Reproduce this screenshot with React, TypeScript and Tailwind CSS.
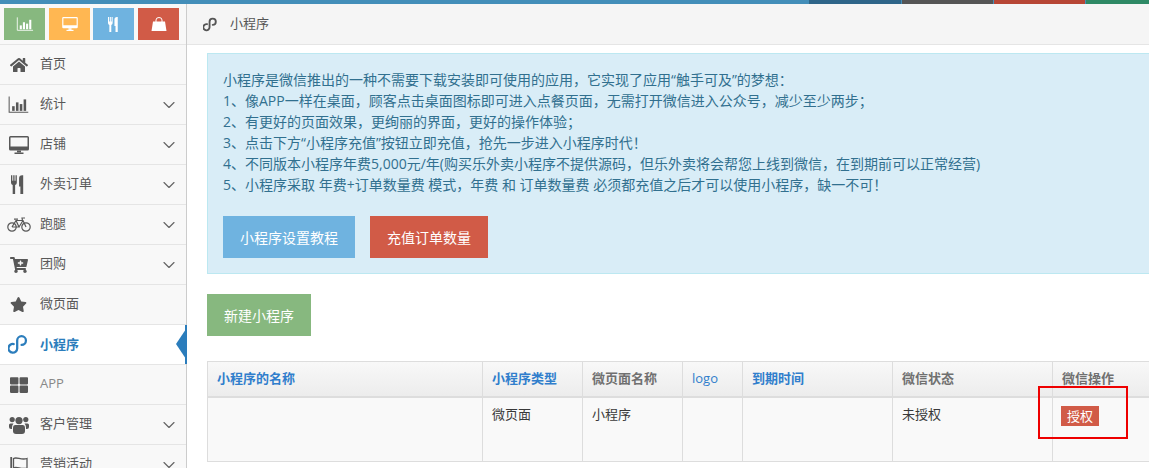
import type { ReactNode } from 'react';
import { ChevronDown } from 'lucide-react';
import { FaCartPlus, FaHome, FaStar, FaThLarge } from 'react-icons/fa';

function MiniProgramIcon({ size, strokeWidth }: { size: number; strokeWidth: number }) {
  return (
    <svg width={size} height={size} viewBox="0 0 24 24" fill="none" stroke="currentColor" strokeWidth={strokeWidth} strokeLinecap="round">
      <path d="M6.5 11.5 A5 5 0 1 0 10.5 16.5 V7.5 A5 5 0 1 1 15.5 12.5" />
    </svg>
  );
}

function ChartIcon({ width, height }: { width: number; height: number }) {
  return (
    <svg width={width} height={height} viewBox="0 0 24 20" fill="currentColor">
      <path d="M1 0.5 V19 H23.5" fill="none" stroke="currentColor" strokeWidth="1.2" />
      <rect x="4.5" y="12" width="3" height="5.5" />
      <rect x="9" y="7.5" width="3" height="10" />
      <rect x="13.5" y="9.5" width="3" height="8" />
      <rect x="18" y="4" width="3" height="13.5" />
    </svg>
  );
}

function DesktopIcon({ width, height }: { width: number; height: number }) {
  return (
    <svg width={width} height={height} viewBox="0 0 20 18" fill="currentColor">
      <path fillRule="evenodd" d="M1.5 0 H18.5 A1.5 1.5 0 0 1 20 1.5 V13 A1.5 1.5 0 0 1 18.5 14.5 H1.5 A1.5 1.5 0 0 1 0 13 V1.5 A1.5 1.5 0 0 1 1.5 0 Z M1.5 1.5 V10.5 H18.5 V1.5 Z" />
      <rect x="8" y="14.5" width="4" height="2" />
      <rect x="5.5" y="16.5" width="9" height="1.5" />
    </svg>
  );
}

function CutleryIcon({ width, height }: { width: number; height: number }) {
  return (
    <svg width={width} height={height} viewBox="0 0 16 20" fill="currentColor">
      <path d="M0 0 H1.4 V6 H2.4 V0 H3.8 V6 H4.8 V0 H6.2 V8 Q6.2 10 4.4 10.6 V20 H1.8 V10.6 Q0 10 0 8 Z" />
      <path d="M10 20 V12 H8.6 V3.5 Q8.6 0 12 0 H13 V20 Z" />
    </svg>
  );
}

function BagIcon({ width, height }: { width: number; height: number }) {
  return (
    <svg width={width} height={height} viewBox="0 0 16 14" fill="currentColor">
      <path d="M5 6 V3 A3 2.5 0 0 1 11 3 V6" fill="none" stroke="currentColor" strokeWidth="1" />
      <path d="M2 4.5 H14 L15.5 14 H0.5 Z" />
    </svg>
  );
}

function BicycleIcon() {
  return (
    <svg width={24} height={15} viewBox="0 0 24 15" fill="none" stroke="currentColor" strokeWidth="1.2">
      <circle cx="5" cy="10" r="4.2" />
      <circle cx="19" cy="10" r="4.2" />
      <path d="M5 10 L9 3.5 H16 L19 10 M9 3.5 L12 10 H5 M12 10 L16 3.5 M7 2.2 H11 M15.5 3.5 L15 1 H18" />
    </svg>
  );
}

function UsersIcon() {
  return (
    <svg width={20} height={18} viewBox="0 0 20 18" fill="currentColor">
      <circle cx="10" cy="4.6" r="3.6" />
      <circle cx="3.2" cy="3.6" r="2.6" />
      <circle cx="16.8" cy="3.6" r="2.6" />
      <path d="M6 9 H14 Q16 9 16 11.5 V15 Q16 18 13 18 H7 Q4 18 4 15 V11.5 Q4 9 6 9 Z" />
      <path d="M1.5 7.5 H4.5 Q3 9 3 11.5 V13 H2 Q0 13 0 11 V9 Q0 7.5 1.5 7.5 Z" />
      <path d="M18.5 7.5 H15.5 Q17 9 17 11.5 V13 H18 Q20 13 20 11 V9 Q20 7.5 18.5 7.5 Z" />
    </svg>
  );
}

function FlagIcon() {
  return (
    <svg width={18} height={18} viewBox="0 0 18 18" fill="none" stroke="currentColor" strokeWidth="1.3">
      <path d="M1.2 1 V18" strokeWidth="1.8" />
      <path d="M3.5 2.5 C7 0.5 11 4.5 17 2.5 V12 C11 14 7 10 3.5 12 Z" />
    </svg>
  );
}

interface MenuItem {
  label: string;
  icon: ReactNode;
  hasChildren?: boolean;
  active?: boolean;
  latin?: boolean;
}

const menu: MenuItem[] = [
  { label: '首页', icon: <FaHome size={18} /> },
  { label: '统计', icon: <ChartIcon width={21} height={17} />, hasChildren: true },
  { label: '店铺', icon: <DesktopIcon width={20} height={18} />, hasChildren: true },
  { label: '外卖订单', icon: <CutleryIcon width={15} height={19} />, hasChildren: true },
  { label: '跑腿', icon: <BicycleIcon />, hasChildren: true },
  { label: '团购', icon: <FaCartPlus size={18} />, hasChildren: true },
  { label: '微页面', icon: <FaStar size={17} /> },
  { label: '小程序', icon: <MiniProgramIcon size={21} strokeWidth={2.6} />, active: true },
  { label: 'APP', icon: <FaThLarge size={18} />, latin: true },
  { label: '客户管理', icon: <UsersIcon />, hasChildren: true },
  { label: '营销活动', icon: <FlagIcon />, hasChildren: true },
];

const intro = [
  '小程序是微信推出的一种不需要下载安装即可使用的应用，它实现了应用“触手可及”的梦想：',
  '1、像APP一样在桌面，顾客点击桌面图标即可进入点餐页面，无需打开微信进入公众号，减少至少两步；',
  '2、有更好的页面效果，更绚丽的界面，更好的操作体验；',
  '3、点击下方“小程序充值”按钮立即充值，抢先一步进入小程序时代！',
  '4、不同版本小程序年费5,000元/年(购买乐外卖小程序不提供源码，但乐外卖将会帮您上线到微信，在到期前可以正常经营)',
  '5、小程序采取 年费+订单数量费 模式，年费 和 订单数量费 必须都充值之后才可以使用小程序，缺一不可！',
];

const columns = [
  { label: '小程序的名称', className: 'w-[275px] font-bold text-[#307ecc]' },
  { label: '小程序类型', className: 'w-[100px] font-bold text-[#307ecc]' },
  { label: '微页面名称', className: 'w-[100px] font-bold text-[#707070]' },
  { label: 'logo', className: 'w-[60px] font-medium text-[#307ecc]' },
  { label: '到期时间', className: 'w-[150px] font-bold text-[#307ecc]' },
  { label: '微信状态', className: 'w-[160px] font-bold text-[#707070]' },
  { label: '微信操作', className: 'w-[118px] font-bold text-[#707070]' },
];

function SideItem({ item }: { item: MenuItem }) {
  return (
    <div
      className={`relative flex h-10 shrink-0 items-center border-b border-[#e5e5e5] ${
        item.active ? 'bg-white font-bold text-[#2b7dbc]' : 'bg-[#f8f8f8] text-[#585858]'
      }`}
    >
      <span className="flex w-[37px] shrink-0 justify-center">{item.icon}</span>
      <span className={`ml-[3px] flex-1 text-[13px] ${item.active ? '' : 'pb-0.5'} ${item.latin ? 'text-[#888888]' : ''}`}>
        {item.label}
      </span>
      {item.hasChildren && <ChevronDown size={20} strokeWidth={1.4} className="mr-[7px] text-[#666]" />}
      {item.active && (
        <>
          <span className="absolute top-[4px] right-0 z-10 border-y-[15px] border-r-[10px] border-y-transparent border-r-[#2b7dbc]" />
          <span className="absolute top-0 right-[-1px] bottom-0 z-10 w-[2px] bg-[#2b7dbc]" />
        </>
      )}
    </div>
  );
}

export default function App() {
  return (
    <div className="flex h-screen flex-col overflow-hidden bg-white font-['Open_Sans','Noto_Sans_CJK_SC',sans-serif] text-[13px]">
      <div className="flex h-1 shrink-0 bg-[#438eb9]">
        <div className="ml-[809px] w-[92px] bg-[#2e6589]" />
        <div className="ml-px w-[91px] bg-[#555555]" />
        <div className="ml-px w-[91px] bg-[#b74635]" />
        <div className="ml-px flex-1 bg-[#2e8965]" />
      </div>

      <div className="flex min-h-0 flex-1">
        <aside className="flex w-[187px] shrink-0 flex-col border-r border-[#cccccc] bg-[#f8f8f8]">
          <div className="flex h-[41px] shrink-0 gap-1 border-b border-[#e5e5e5] pt-1 pl-1 text-white">
            <span className="flex h-8 w-[41px] items-center justify-center bg-[#87b87f]">
              <ChartIcon width={18} height={14} />
            </span>
            <span className="flex h-8 w-[41px] items-center justify-center bg-[#ffb752]">
              <DesktopIcon width={16} height={14} />
            </span>
            <span className="-ml-px flex h-8 w-[41px] items-center justify-center bg-[#6fb3e0]">
              <CutleryIcon width={12} height={15} />
            </span>
            <span className="flex h-8 w-[41px] items-center justify-center bg-[#d15b47]">
              <BagIcon width={16} height={14} />
            </span>
          </div>
          {menu.map((item) => (
            <SideItem key={item.label} item={item} />
          ))}
        </aside>

        <main className="relative min-w-0 flex-1 overflow-hidden">
          <div className="flex h-[41px] items-center border-b border-[#e5e5e5] bg-[#f5f5f5] pl-[16px] text-[#555555]">
            <span className="flex w-[27px]">
              <MiniProgramIcon size={15} strokeWidth={3} />
            </span>
            <span>小程序</span>
          </div>

          <div className="mt-2 ml-5 w-[980px]">
            <div className="border border-[#bce8f1] bg-[#d9edf7] px-[15px] pt-[15px] pb-[15px] text-[14px] leading-[21px] text-[#31708f]">
              {intro.map((line) => (
                <p key={line}>{line}</p>
              ))}
              <div className="mt-[21px] flex gap-[15px] text-white">
                <span className="flex h-[42px] w-[132px] items-center justify-center bg-[#6fb3e0]">小程序设置教程</span>
                <span className="flex h-[42px] w-[118px] items-center justify-center bg-[#d15b47]">充值订单数量</span>
              </div>
            </div>

            <div className="mt-5 flex h-[42px] w-[104px] items-center justify-center bg-[#87b87f] text-[14px] text-white">
              新建小程序
            </div>

            <table className="mt-[25px] w-[963px] table-fixed border-collapse">
              <thead>
                <tr className="bg-gradient-to-b from-[#f8f8f8] to-[#ececec]">
                  {columns.map((col) => (
                    <th
                      key={col.label}
                      className={`h-[35px] border border-b-2 border-[#dddddd] pb-px pl-[9px] text-left ${col.className}`}
                    >
                      {col.label}
                    </th>
                  ))}
                </tr>
              </thead>
              <tbody>
                <tr className="bg-[#f9f9f9] align-top text-[#393939]">
                  <td className="h-[65px] border border-[#dddddd]" />
                  <td className="border border-[#dddddd] pt-[7px] pl-[9px]">微页面</td>
                  <td className="border border-[#dddddd] pt-[7px] pl-[9px]">小程序</td>
                  <td className="border border-[#dddddd]" />
                  <td className="border border-[#dddddd]" />
                  <td className="border border-[#dddddd] pt-[7px] pl-[9px]">未授权</td>
                  <td className="border border-[#dddddd] pt-2 pl-2">
                    <span className="block h-5 w-[38px] bg-[#d15b47] text-center leading-5 text-white">授权</span>
                  </td>
                </tr>
              </tbody>
            </table>
          </div>

          {/* red annotation drawn over the screenshot */}
          <div className="absolute top-[382px] left-[851px] h-[53px] w-[90px] border-2 border-[#ee0000]" />
        </main>
      </div>
    </div>
  );
}
